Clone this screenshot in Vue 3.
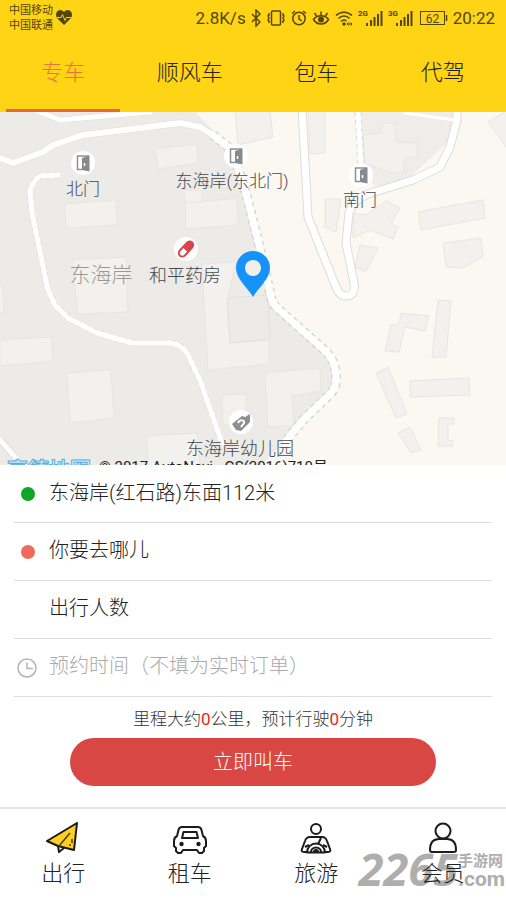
<template>
  <div class="page">
    <header class="header">
      <div class="status">
        <div class="carriers">
          <span>中国移动</span>
          <span>中国联通</span>
        </div>
        <svg class="heart" width="16" height="15" viewBox="0 0 16 15">
          <path d="M8 15 1 8C-1 5 0 0 4.300 0 6 0 7.300 1 8 2 8.700 1 10 0 11.700 0 16 0 17 5 15 8Z" fill="#54460a" />
          <path d="M1 7.500h4l1.500-3 2.500 6 1.500-3H15" fill="none" stroke="#ffd414" stroke-width="1" />
        </svg>
        <span class="speed">2.8K/s</span>
        <div class="icons">
          <svg width="10" height="18" viewBox="0 0 10 18">
            <path d="M1 5l8 8-4 4V1l4 4-8 8" class="line" />
          </svg>
          <svg width="20" height="18" viewBox="0 0 20 18">
            <rect x="5.500" y="2" width="9" height="14" rx="1" class="line" />
            <path d="M3 4v2l-1 1 1 2-1 2 1 1v2M17 4v2l1 1-1 2 1 2-1 1v2" class="line" />
          </svg>
          <svg width="16" height="18" viewBox="0 0 16 18">
            <circle cx="8" cy="9.500" r="6.200" class="line" />
            <path d="M8 6v4l3 2M1 4.500 4 2M15 4.500 12 2" class="line" />
          </svg>
          <svg width="18" height="18" viewBox="0 0 18 18">
            <path d="M1.500 10.500C5 5.500 13 5.500 16.500 10.500 13 16.500 5 16.500 1.500 10.500ZM9 6V2.500M4.500 7 2.500 4M13.500 7l2-3" class="line" />
            <circle cx="9" cy="10.500" r="3" fill="#54460a" />
          </svg>
          <svg width="18" height="18" viewBox="0 0 18 18">
            <path d="M1 6.500C5.500 2 12.500 2 17 6.500M3.500 9.500c3-3.200 8-3.200 11 0M6 12.500c1.700-1.700 4-1.700 5.500-.5" class="line" />
            <circle cx="9" cy="15" r="1.700" fill="#54460a" />
            <path d="M12 15h5M13.500 13.500 12 15l1.500 1.500M15.500 13.500 17 15l-1.500 1.500" class="thin" />
          </svg>
          <svg v-for="net in networks" :key="net" width="25" height="18" viewBox="0 0 25 18">
            <text x="0" y="7" class="net">{{ net }}</text>
            <path d="M9 17v-3M13 17v-6M16.500 17V8M20 17V5M23.500 17V2" class="bars" />
          </svg>
          <svg class="battery" width="28" height="18" viewBox="0 0 28 18">
            <rect x=".5" y="2.500" width="24" height="13" class="thin" />
            <path d="M26.500 6v6" class="line" />
            <text x="12.500" y="13.500" text-anchor="middle" class="level">62</text>
          </svg>
        </div>
        <span class="clock">20:22</span>
      </div>
      <nav class="tabs">
        <button
          v-for="tab in tabs"
          :key="tab"
          type="button"
          :class="['tab', { active: tab === activeTab }]"
          @click="activeTab = tab"
        >{{ tab }}</button>
      </nav>
    </header>

    <main class="main">
      <div class="map">
        <svg class="map-canvas" viewBox="0 112 506 353" preserveAspectRatio="xMidYMax slice">
          <rect x="0" y="112" width="506" height="353" fill="#ecebe7" />
          <path d="M195 112 230 147 245 190 260 245 273 302 326 352 336 370 334 390 303 420 262 465H506V112Z" fill="#fbf8f2" />
          <path d="M361 112H455L450 140 410 177 375 187 363 167Z" fill="#efede9" />

          <polygon v-for="shape in buildings" :key="shape" :points="shape" class="building" />
          <polygon points="227,298 268,295 270,339 230,343" fill="#ecebe7" stroke="#e3e1dd" />

          <g class="road-edge">
            <path d="M32 109 60 120 150 112" stroke-width="6" />
            <path d="M0 158 13 163 43 152 53 145 83 135 133 129 180 123 200 127 213 135" stroke-width="7" />
            <path :d="loopRoad" stroke-width="9" />
            <path d="M0 440 16 458" stroke-width="7" />
          </g>
          <g class="dashed">
            <path :d="eastPath" stroke-width="10" />
            <path :d="gardenPath" stroke-width="6" />
            <path d="M358 112 361 166" stroke-width="7" />
          </g>
          <g class="road">
            <path d="M32 109 60 120 150 112" stroke-width="5" />
            <path d="M0 158 13 163 43 152 53 145 83 135 133 129 180 123 200 127 213 135" stroke-width="6" />
            <path :d="loopRoad" stroke-width="7" />
            <path d="M0 440 16 458" stroke-width="5" />
            <path :d="eastPath" stroke-width="7" />
            <path :d="gardenPath" stroke-width="5" />
            <path d="M358 112 361 166" stroke-width="5" />
            <path d="M405 113 454 120" stroke-width="3" />
          </g>

          <text x="101" y="282" class="area">东海岸</text>
          <g v-for="poi in pois" :key="poi.name">
            <circle :cx="poi.x" :cy="poi.y" r="12" fill="#fff" />
            <g :transform="`translate(${poi.x} ${poi.y})`">
              <template v-if="poi.kind === 'gate'">
                <path d="M-1 6.500H-5.500V-7H6" fill="none" stroke="#8b9093" stroke-width="1.500" />
                <path d="M-1-5 6.500-7.500V8.500L-1 7Z" fill="#858a8d" />
                <path d="M1.500 0v3" stroke="#fff" stroke-width="1.500" />
              </template>
              <g v-else-if="poi.kind === 'pharmacy'" transform="rotate(-48)">
                <rect x="-10" y="-4.500" width="20" height="9" rx="4.500" fill="#d9434b" />
                <path d="M-1-2.500H-5.500a2.500 2.500 0 0 0 0 5H-1Z" fill="#fff" />
              </g>
              <g v-else>
                <path d="M-9 2 1-6 4-5 9-8V0L0 9-5 8Z" fill="#8b9093" />
                <path d="M-3 1C-1-3 4-2 3 1L0 5" fill="none" stroke="#fff" stroke-width="2" />
              </g>
            </g>
            <text :x="poi.labelX" :y="poi.labelY" :class="['poi', { large: poi.large }]">{{ poi.name }}</text>
          </g>

          <path d="M253 297C248 288 236 279 236 268a17 17 0 0 1 34 0C270 279 258 288 253 297Z" fill="#1593fa" />
          <circle cx="253" cy="268" r="8" fill="#f1efeb" />

          <text x="7" y="477" class="brand">高德地图</text>
          <text x="99" y="472" class="copyright">© 2017 AutoNavi - GS(2016)710号</text>
        </svg>
      </div>

      <form class="form" @submit.prevent>
        <label class="row">
          <span class="mark"><i class="dot start"></i></span>
          <input v-model="start" type="text" aria-label="起点">
        </label>
        <label class="row">
          <span class="mark"><i class="dot end"></i></span>
          <input v-model="end" type="text" placeholder="你要去哪儿" aria-label="终点">
        </label>
        <label class="row">
          <span class="mark"></span>
          <input v-model="people" type="text" placeholder="出行人数" aria-label="出行人数">
        </label>
        <label class="row time">
          <span class="mark">
            <svg width="20" height="20" viewBox="0 0 20 20">
              <path d="M10 1a9 9 0 1 0 0 18 9 9 0 0 0 0-18ZM10 4.500v6h6" fill="none" stroke="#b4b4b4" stroke-width="1.500" />
            </svg>
          </span>
          <input v-model="time" type="text" placeholder="预约时间（不填为实时订单）" aria-label="预约时间">
        </label>
        <p class="summary">里程大约<b>{{ distance }}</b>公里，预计行驶<b>{{ minutes }}</b>分钟</p>
        <button class="submit" type="submit">立即叫车</button>
      </form>
    </main>

    <footer class="footer">
      <div class="stamp">
        <span class="stamp-number">2265</span>
        <span class="stamp-side">
          <span>手游网</span>
          <span class="stamp-com">.com</span>
        </span>
      </div>
      <a href="#" class="item">
        <svg width="34" height="34" viewBox="0 0 34 34">
          <path d="M12 25l1 6 5-4" fill="#fff" stroke="#1c1a17" stroke-width="2" stroke-linejoin="round" />
          <path d="M31 2 1 20 12 25 28 29Z" fill="#fbd01f" stroke="#1c1a17" stroke-width="2" stroke-linejoin="round" />
          <path d="M24 12 13 25M26 18v4M24 23v2" fill="none" stroke="#4a3d0c" stroke-width="1.500" />
        </svg>
        <span>出行</span>
      </a>
      <a href="#" class="item">
        <svg width="34" height="34" viewBox="0 0 34 34">
          <g fill="none" stroke="#1c1c1c" stroke-width="2" stroke-linejoin="round">
            <path d="M9 6h16c2 0 3 1 3.500 3L30 15c2 1 3 3 3 5v5l-2 2v3l-2 2h-3l-2-3H10l-2 3H5l-2-2v-3l-2-2v-5c0-2 1-4 3-5L5.500 9C6 7 7 6 9 6Z" />
            <path d="M10.500 11h13l1.500 6H9Z" />
          </g>
          <circle cx="8.500" cy="23" r="2.200" fill="#1c1c1c" />
          <circle cx="25.500" cy="23" r="2.200" fill="#1c1c1c" />
        </svg>
        <span>租车</span>
      </a>
      <a href="#" class="item">
        <svg width="34" height="34" viewBox="0 0 34 34">
          <g fill="none" stroke="#1c1c1c" stroke-width="2" stroke-linejoin="round">
            <circle cx="17" cy="8" r="5" />
            <path d="M8 31H5c-2 0-3-1-2-3L6 20c1-3 3-4 5-4h12c2 0 4 1 5 4l3 8c1 2 0 3-2 3H26M6 26l4-2M28 26l-4-2M22 17l-3 6" />
            <path d="M8 31.500a9 9 0 0 1 18 0Z" />
            <path d="M12 31a5 4.500 0 0 1 10 0" />
          </g>
          <path d="M14 31a3 3 0 0 1 6 0Z" fill="#1c1c1c" />
        </svg>
        <span>旅游</span>
      </a>
      <a href="#" class="item">
        <svg width="34" height="34" viewBox="0 0 34 34">
          <g fill="none" stroke="#1c1c1c" stroke-width="2">
            <circle cx="17" cy="10" r="7.500" />
            <path d="M4 29c0-7 3-11 9-11h8c6 0 9 4 9 11q0 2-2 2H6q-2 0-2-2Z" />
          </g>
        </svg>
        <span>会员</span>
      </a>
    </footer>
  </div>
</template>

<script setup>
import { ref } from 'vue';

const networks = ['2G', '3G'];
const tabs = ['专车', '顺风车', '包车', '代驾'];
const activeTab = ref('专车');

const start = ref('东海岸(红石路)东面112米');
const end = ref('');
const people = ref('');
const time = ref('');
const distance = ref(0);
const minutes = ref(0);

const pois = [
  { name: '北门', kind: 'gate', x: 83, y: 163, labelX: 83, labelY: 195 },
  { name: '东海岸(东北门)', kind: 'gate', x: 236, y: 156, labelX: 232, labelY: 187 },
  { name: '南门', kind: 'gate', x: 361, y: 175, labelX: 360, labelY: 206 },
  { name: '和平药房', kind: 'pharmacy', x: 186, y: 249, labelX: 185, labelY: 282, large: true },
  { name: '东海岸幼儿园', kind: 'school', x: 241, y: 422, labelX: 240, labelY: 455, large: true },
];

// Roads
const loopRoad = 'M302 109 308 217 336 287Q340 297 347 296 356 295 354 283L346 243 349 213Q353 200 368 194L413 180 440 167 450 147 457 120V109';
const eastPath = 'M213 135 232 150 245 190 258 240 271 297Q272 303 277 308L322 348Q337 360 336 380 336 390 326 398L303 420 286 441';
const gardenPath = 'M58 175 40 176Q34 180 30 190L32 213 48 290 55 305 68 318 97 333 132 343H170Q182 345 187 353L200 380 222 443';

const buildings = [
  '155,149 197,144 198,163 158,169',
  '64,204 116,200 117,225 66,228',
  '184,190 202,190 202,203 185,203',
  '185,203 237,198 238,225 186,229',
  '72,260 126,257 128,312 78,314',
  '0,340 51,337 53,361 0,366',
  '67,373 111,370 114,418 70,423',
  '202,264 236,262 228,298 230,343 269,340 269,364 208,370',
  '147,436 197,433 200,466 148,466',
  '222,395 246,394 246,425 223,425',
  '265,373 320,368 321,391 292,396 294,425 268,427',
  '-2,286 3,286 4,313 -2,313',
  '235,111 270,111 273,137 238,145',
  '308,111 325,111 325,153 310,154',
  '363,135 381,133 382,123 395,123 396,142 417,143 417,157 405,158 403,173 391,173 365,163',
  '325,199 341,199 336,232 325,227',
  '353,213 366,215 386,201 400,208 391,223 398,227 393,239 370,230 353,238',
  '360,245 378,248 366,272 355,267',
  '418,212 483,200 485,218 421,230',
  '443,243 481,238 483,257 463,268 446,267',
  '488,122 508,110 508,150',
  '401,313 429,316 425,331 405,327 399,352 385,351 391,325 399,324',
  '438,300 451,301 446,357 432,357',
  '376,373 388,367 407,414 396,418',
  '410,381 469,378 470,395 410,397',
  '398,433 410,427 421,450 411,453',
  '439,418 454,418 454,424 448,424 448,440 453,441 453,446 438,446',
];
</script>

<style>
body {
  margin: 0;
  background: #fff;
}
</style>

<style scoped>
.page {
  display: flex;
  flex-direction: column;
  min-height: 100vh;
  font-family: Roboto, "Noto Sans CJK SC", sans-serif;
  color: #333;
}

button,
input {
  font-family: inherit;
  font-weight: inherit;
  border: 0;
  background: none;
  padding: 0;
}

.header {
  background: #ffd414;
}

.status {
  display: flex;
  align-items: center;
  height: 33px;
  padding: 2px 11px 0 9px;
  box-sizing: border-box;
  color: #54460a;
}

.carriers {
  display: flex;
  flex-direction: column;
  font-size: 11px;
  line-height: 15px;
}

.heart {
  margin-left: 3px;
}

.speed {
  margin-left: auto;
  font-size: 17px;
}

.icons {
  display: flex;
  align-items: center;
  gap: 5px;
  margin: 0 5px;
}

.line {
  fill: none;
  stroke: #54460a;
  stroke-width: 1.5;
}

.thin {
  fill: none;
  stroke: #54460a;
  stroke-width: 1;
}

.bars {
  fill: none;
  stroke: #54460a;
  stroke-width: 2;
}

.net {
  font-size: 8px;
  font-weight: 700;
  fill: #54460a;
}

.level {
  font-size: 12px;
  fill: #54460a;
}

.battery {
  margin-left: 2px;
}

.clock {
  font-size: 17px;
}

.tabs {
  display: flex;
  height: 79px;
}

.tab {
  flex: 1;
  position: relative;
  padding-bottom: 6px;
  font-size: 22px;
  font-weight: 300;
  color: #222;
  cursor: pointer;
}

.tab.active {
  color: #ee6e42;
}

.tab.active::after {
  content: "";
  position: absolute;
  left: 5%;
  right: 5%;
  bottom: 0;
  height: 3px;
  background: #e5693c;
}

.main {
  flex: 1;
  display: flex;
  flex-direction: column;
}

.map {
  flex: 1;
  position: relative;
  min-height: 240px;
  overflow: hidden;
}

.map-canvas {
  position: absolute;
  width: 100%;
  height: 100%;
}

.building {
  fill: #f3f1ed;
  stroke: #e8e6e2;
}

.road-edge path,
.dashed path,
.road path {
  fill: none;
  stroke-linejoin: round;
}

.road-edge path {
  stroke: #dfddd9;
}

.dashed path {
  stroke: #d8d6d2;
  stroke-dasharray: 4 4;
}

.road path {
  stroke: #fff;
  stroke-linecap: round;
}

.poi {
  font-size: 17px;
  font-weight: 300;
  text-anchor: middle;
  fill: #44484e;
}

.poi.large {
  font-size: 18px;
}

.area {
  font-size: 21px;
  font-weight: 300;
  text-anchor: middle;
  fill: #999;
}

.brand {
  font-size: 21px;
  font-weight: 700;
  fill: #d8effb;
  stroke: #58aee0;
}

.copyright {
  font-size: 15px;
  fill: #222;
}

.form {
  display: flex;
  flex-direction: column;
  background: #fff;
  font-weight: 300;
}

.row {
  display: flex;
  align-items: center;
  height: 57px;
  margin: 0 14px;
  border-bottom: 1px solid #dedede;
}

.mark {
  display: flex;
  width: 35px;
}

.dot {
  width: 14px;
  height: 14px;
  margin-left: 7px;
  border-radius: 50%;
}

.dot.start {
  background: #10a526;
}

.dot.end {
  background: #ee6a5b;
}

.mark svg {
  margin-left: 3px;
}

.row input {
  flex: 1;
  min-width: 0;
  padding-bottom: 4px;
  font-size: 20px;
  color: #222;
  outline: none;
}

.row input::placeholder {
  color: #222;
  opacity: 1;
}

.row.time input::placeholder {
  color: #aaa;
}

.summary {
  margin: 10px 0 6px;
  font-size: 17px;
  line-height: 25px;
  text-align: center;
}

.summary b {
  font-weight: 400;
  color: #f01c1c;
}

.submit {
  height: 48px;
  margin: 0 70px 21px;
  padding-bottom: 4px;
  border-radius: 24px;
  background: #d94745;
  font-size: 20px;
  color: #fff;
  cursor: pointer;
}

.footer {
  position: relative;
  display: flex;
  height: 91px;
  border-top: 2px solid #e6e6e6;
  background: #fff;
}

.item {
  flex: 1;
  position: relative;
  display: flex;
  flex-direction: column;
  align-items: center;
  padding-top: 12px;
  font-size: 22px;
  font-weight: 300;
  line-height: 38px;
  color: #222;
  text-decoration: none;
}

.stamp {
  position: absolute;
  right: 1px;
  bottom: 12px;
  display: flex;
  align-items: flex-end;
  color: #aeaeae;
  font-weight: 700;
  pointer-events: none;
}

.stamp-number {
  font-family: "Open Sans", sans-serif;
  font-size: 45px;
  font-style: italic;
  line-height: 38px;
}

.stamp-side {
  display: flex;
  flex-direction: column;
  font-size: 15px;
  line-height: 17px;
}

.stamp-com {
  font-size: 21px;
  line-height: 18px;
}
</style>
